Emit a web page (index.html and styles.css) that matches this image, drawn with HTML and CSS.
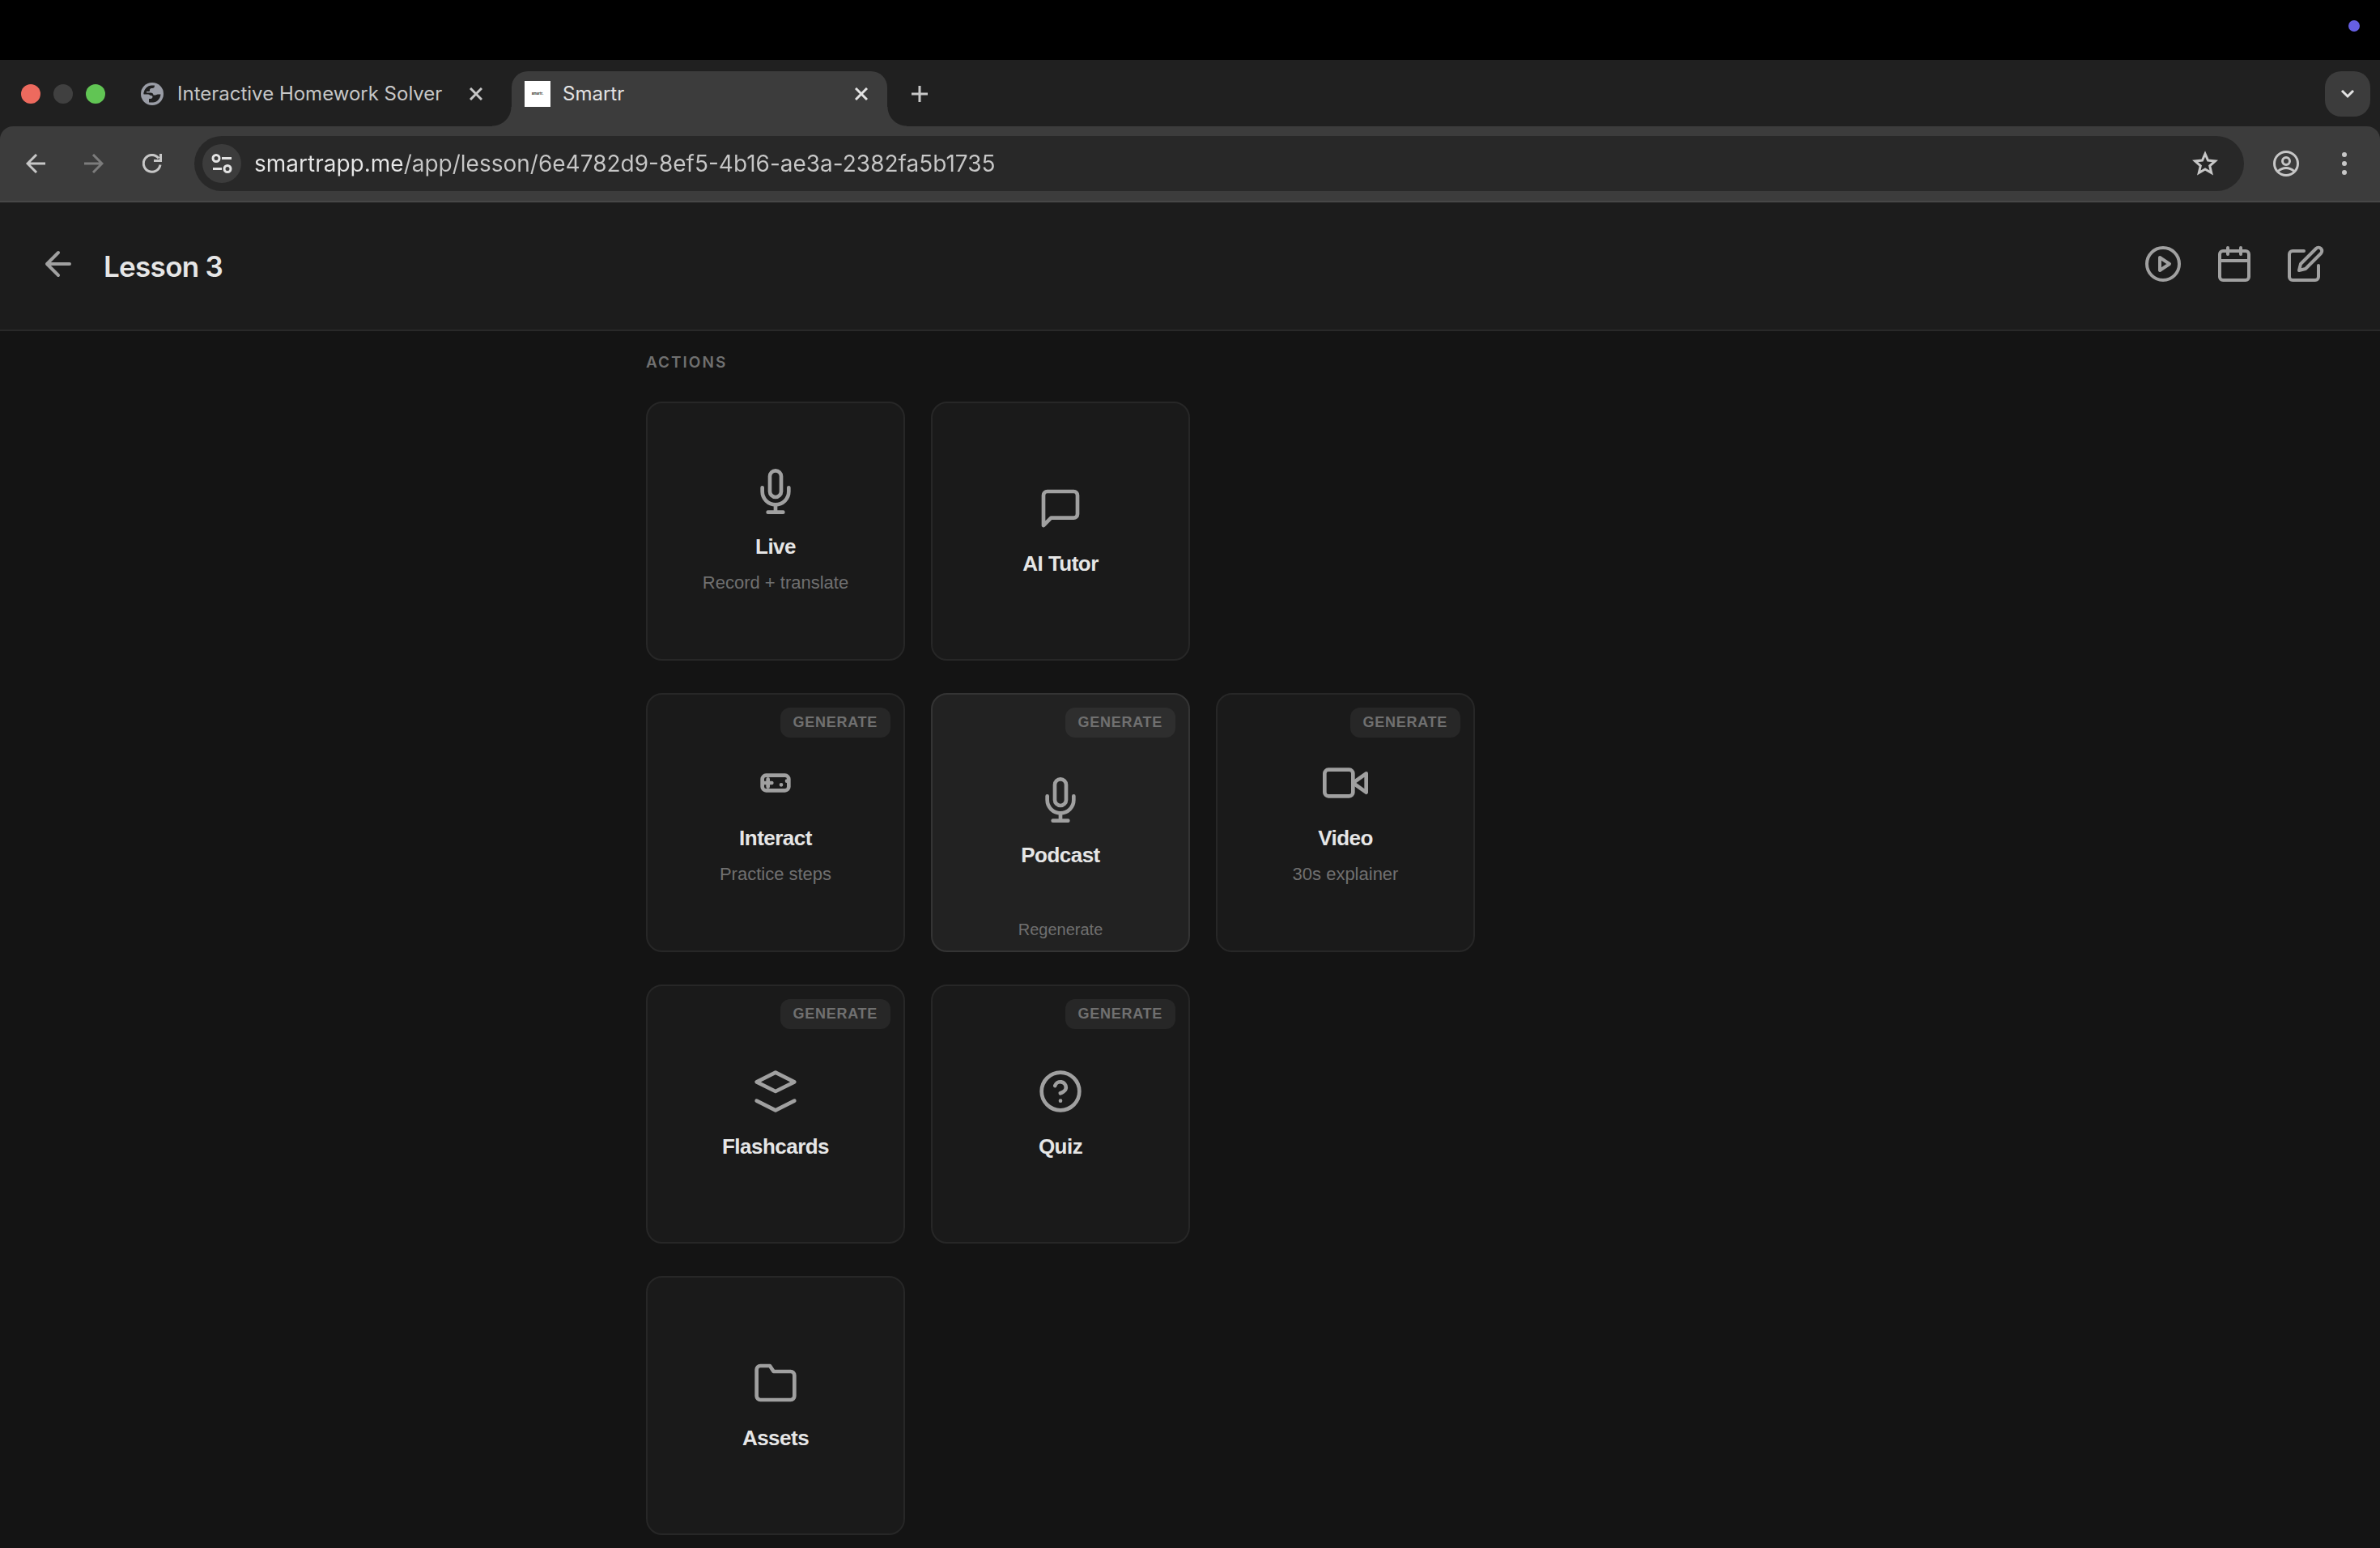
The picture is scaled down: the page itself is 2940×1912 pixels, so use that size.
FILE: index.html
```html
<!DOCTYPE html>
<html lang="en">
<head>
<meta charset="utf-8">
<meta name="viewport" content="width=device-width, initial-scale=1">
<title>Smartr</title>
<link rel="stylesheet" href="styles.css">
</head>
<body>
<div class="menubar"><span class="menubar-dot"></span></div>

<div class="browser">
  <div class="tabstrip">
    <div class="window-controls">
      <button class="light light-close" aria-label="Close window"></button>
      <button class="light light-min" aria-label="Minimise window"></button>
      <button class="light light-max" aria-label="Zoom window"></button>
    </div>
    <div class="tab">
      <span class="tab-icon">
        <svg width="28" height="28" viewBox="0 0 28 28"><circle cx="14" cy="14" r="14" fill="#9a9da6"/><path d="M3.500 13.500C4 8 8 3.500 13.500 3.500H17c0 2.500-1 3.500-3 3.500h-1c-1 0-2 1-2 2v1c0 1-1 1-2 1H7v2.500z" fill="#202020"/><path d="M3.500 12.500H12c2 0 3.500 1 3.500 3h2.500c1 0 1.500-1 3-1h3.500C24 20 20 24.500 15 24.500h-5V20h2c1.500 0 2.500-1 2.500-2.500 0-1-1-1.500-2-1.500-1.500 0-2-1.500-3.500-1.500H3.500z" fill="#202020"/></svg>
      </span>
      <span class="tab-title">Interactive Homework Solver</span>
      <button class="icon-btn tab-close" aria-label="Close tab"><svg width="16" height="16" viewBox="0 0 16 16"><path d="M1 1l14 14M15 1L1 15" stroke="#c7c7c7" stroke-width="3"/></svg></button>
    </div>
    <div class="tab tab-active">
      <span class="tab-icon favicon">Smartr.</span>
      <span class="tab-title">Smartr</span>
      <button class="icon-btn tab-close" aria-label="Close tab"><svg width="16" height="16" viewBox="0 0 16 16"><path d="M1 1l14 14M15 1L1 15" stroke="#e3e3e3" stroke-width="3"/></svg></button>
    </div>
    <button class="icon-btn new-tab" aria-label="New tab"><svg width="20" height="20" viewBox="0 0 20 20"><path d="M10 0v20M0 10h20" stroke="#c7c7c7" stroke-width="3"/></svg></button>
    <button class="icon-btn tab-search" aria-label="Search tabs"><svg width="18" height="12" viewBox="0 0 18 12"><path d="M2 2l7 7 7-7" fill="none" stroke="#e3e3e3" stroke-width="3"/></svg></button>
  </div>

  <div class="toolbar">
    <button class="icon-btn" aria-label="Back"><svg width="24" height="24" viewBox="0 0 24 24"><path d="M24 12H2M13 1L2 12l11 11" fill="none" stroke="#c7c7c7" stroke-width="3"/></svg></button>
    <button class="icon-btn" aria-label="Forward"><svg width="24" height="24" viewBox="0 0 24 24"><path d="M0 12h22M11 1l11 11-11 11" fill="none" stroke="#7c7c7c" stroke-width="3"/></svg></button>
    <button class="icon-btn" aria-label="Reload"><svg width="24" height="24" viewBox="0 0 24 24"><path d="M22 13.500A10.400 10.400 0 1 1 20 5.500M22.500 0v8.500H14" fill="none" stroke="#c7c7c7" stroke-width="3"/></svg></button>
    <div class="omnibox">
      <button class="icon-btn site-info" aria-label="View site information"><svg width="26" height="24" viewBox="0 0 26 24" fill="none" stroke="#e3e3e3" stroke-width="3"><circle cx="6" cy="5.500" r="4"/><path d="M13 5.500h12M2 18.500h11"/><circle cx="20" cy="18.500" r="4"/></svg></button>
      <input class="url" type="text" aria-label="Address" value="smartrapp.me/app/lesson/6e4782d9-8ef5-4b16-ae3a-2382fa5b1735" spellcheck="false">
      <button class="icon-btn" aria-label="Bookmark this tab"><svg width="32" height="32" viewBox="0 0 32 32"><path d="M16 4l3.500 8.100 8.900.8-6.700 5.900 2 8.700-7.700-4.600-7.700 4.600 2-8.700-6.700-5.900 8.900-.8z" fill="none" stroke="#c7c7c7" stroke-width="3"/></svg></button>
    </div>
    <button class="icon-btn" aria-label="Profile"><svg width="32" height="32" viewBox="0 0 32 32" fill="none" stroke="#c7c7c7" stroke-width="3"><circle cx="16" cy="16" r="14.500"/><circle cx="16" cy="13" r="4.500"/><path d="M6 25.500c6-5.500 14-5.500 20 0"/></svg></button>
    <button class="icon-btn" aria-label="Menu"><svg width="6" height="28" viewBox="0 0 6 28" fill="#c7c7c7"><circle cx="3" cy="3" r="3"/><circle cx="3" cy="14" r="3"/><circle cx="3" cy="25" r="3"/></svg></button>
  </div>
</div>

<header class="page-header">
  <button class="header-btn" aria-label="Go back"><svg class="line-icon" viewBox="0 0 24 24"><path d="M19 12H5M12 19l-7-7 7-7"/></svg></button>
  <h1 class="page-title">Lesson 3</h1>
  <nav class="header-actions" aria-label="Lesson tools">
    <button class="header-btn" aria-label="Play"><svg class="line-icon" viewBox="0 0 24 24"><circle cx="12" cy="12" r="10"/><path d="M10 8l6 4-6 4z"/></svg></button>
    <button class="header-btn" aria-label="Calendar"><svg class="line-icon" viewBox="0 0 24 24"><rect x="3" y="4" width="18" height="18" rx="2"/><path d="M16 2v4M8 2v4M3 10h18"/></svg></button>
    <button class="header-btn" aria-label="Edit"><svg class="line-icon" viewBox="0 0 24 24"><path d="M11 4H4a2 2 0 0 0-2 2v14a2 2 0 0 0 2 2h14a2 2 0 0 0 2-2v-7"/><path d="M18.500 2.500a2.121 2.121 0 0 1 3 3L12 15l-4 1 1-4z"/></svg></button>
  </nav>
</header>

<main class="content">
  <h2 class="section-label">ACTIONS</h2>
  <div class="rows">
    <div class="row">
      <button class="card">
        <svg class="line-icon card-icon" viewBox="0 0 24 24"><path d="M12 1a3 3 0 0 0-3 3v8a3 3 0 0 0 6 0V4a3 3 0 0 0-3-3z"/><path d="M19 10v2a7 7 0 0 1-14 0v-2M12 19v4M8 23h8"/></svg>
        <span class="card-title">Live</span>
        <span class="card-sub">Record + translate</span>
      </button>
      <button class="card">
        <svg class="line-icon card-icon" viewBox="0 0 24 24"><path d="M21 15a2 2 0 0 1-2 2H7l-4 4V5a2 2 0 0 1 2-2h14a2 2 0 0 1 2 2z"/></svg>
        <span class="card-title">AI Tutor</span>
      </button>
    </div>
    <div class="row">
      <button class="card">
        <span class="badge">GENERATE</span>
        <svg class="line-icon card-icon" viewBox="0 0 24 24"><rect x="5" y="8" width="14" height="8" rx="2"/><path d="M6 12h4M8 10v4M15 13h.010M18 11h.010"/></svg>
        <span class="card-title">Interact</span>
        <span class="card-sub">Practice steps</span>
      </button>
      <button class="card card-hover">
        <span class="badge">GENERATE</span>
        <svg class="line-icon card-icon" viewBox="0 0 24 24"><path d="M12 1a3 3 0 0 0-3 3v8a3 3 0 0 0 6 0V4a3 3 0 0 0-3-3z"/><path d="M19 10v2a7 7 0 0 1-14 0v-2M12 19v4M8 23h8"/></svg>
        <span class="card-title">Podcast</span>
        <span class="card-foot">Regenerate</span>
      </button>
      <button class="card">
        <span class="badge">GENERATE</span>
        <svg class="line-icon card-icon" viewBox="0 0 24 24"><path d="M23 7l-7 5 7 5z"/><rect x="1" y="5" width="15" height="14" rx="2"/></svg>
        <span class="card-title">Video</span>
        <span class="card-sub">30s explainer</span>
      </button>
    </div>
    <div class="row">
      <button class="card">
        <span class="badge">GENERATE</span>
        <svg class="line-icon card-icon" viewBox="0 0 24 24"><path d="M12 2L2 7l10 5 10-5zM2 17l10 5 10-5"/></svg>
        <span class="card-title">Flashcards</span>
      </button>
      <button class="card">
        <span class="badge">GENERATE</span>
        <svg class="line-icon card-icon" viewBox="0 0 24 24"><circle cx="12" cy="12" r="10"/><path d="M9.090 9a3 3 0 0 1 5.830 1c0 2-3 3-3 3M12 17h.010"/></svg>
        <span class="card-title">Quiz</span>
      </button>
    </div>
    <div class="row">
      <button class="card">
        <svg class="line-icon card-icon" viewBox="0 0 24 24"><path d="M22 19a2 2 0 0 1-2 2H4a2 2 0 0 1-2-2V5a2 2 0 0 1 2-2h5l2 3h9a2 2 0 0 1 2 2z"/></svg>
        <span class="card-title">Assets</span>
      </button>
    </div>
  </div>
</main>
</body>
</html>
```
FILE: styles.css
```css
* { box-sizing: border-box; }

body {
  margin: 0;
  min-height: 100vh;
  background: #141414;
  color: #e6e6e6;
  font-family: Inter, "Liberation Sans", sans-serif;
}

button {
  margin: 0;
  padding: 0;
  border: 0;
  background: none;
  color: inherit;
  font: inherit;
}

svg { display: block; }

/* System bar */
.menubar {
  display: flex;
  justify-content: flex-end;
  height: 74px;
  padding: 25px;
  background: #000;
}

.menubar-dot {
  width: 14px;
  height: 14px;
  border-radius: 50%;
  background: #665fe3;
}

/* Browser tabs */
.browser { background: #202020; }

.tabstrip {
  display: flex;
  padding: 14px 12px 0 26px;
}

.window-controls {
  display: flex;
  align-items: center;
  gap: 16px;
  height: 56px;
  margin-right: 26px;
}

.light {
  width: 24px;
  height: 24px;
  border-radius: 50%;
}

.light-close { background: #ed6a5e; }
.light-min { background: #404040; }
.light-max { background: #61c554; }

.tab {
  position: relative;
  display: flex;
  align-items: center;
  gap: 15px;
  width: 464px;
  height: 68px;
  padding: 0 20px 12px 16px;
  color: #c7c7c7;
  font-size: 24px;
  line-height: 32px;
}

.tab-active {
  margin-left: 12px;
  border-radius: 20px 20px 0 0;
  background: #3c3c3c;
  color: #e3e3e3;
}

.tab-active::before,
.tab-active::after {
  content: "";
  position: absolute;
  bottom: 0;
  width: 24px;
  height: 24px;
}

.tab-active::before {
  right: 100%;
  background: radial-gradient(circle at 0 0, transparent 23px, #3c3c3c 24px);
}

.tab-active::after {
  left: 100%;
  background: radial-gradient(circle at 100% 0, transparent 23px, #3c3c3c 24px);
}

.tab-icon {
  display: flex;
  align-items: center;
  justify-content: center;
  flex: none;
  width: 32px;
  height: 32px;
}

.favicon {
  background: #fff;
  color: #222;
  font-size: 4px;
  font-weight: 700;
  line-height: 8px;
}

.tab-title { flex: 1; white-space: nowrap; }

.icon-btn {
  display: flex;
  align-items: center;
  justify-content: center;
  flex: none;
  width: 48px;
  height: 48px;
  border-radius: 50%;
}

.tab-close { width: 24px; height: 24px; }

.new-tab { height: 56px; margin-left: 16px; }

.tab-search {
  width: 56px;
  height: 56px;
  margin-left: auto;
  border-radius: 20px;
  background: #3c3c3c;
}

/* Browser toolbar */
.toolbar {
  display: flex;
  align-items: center;
  gap: 24px;
  padding: 12px 20px;
  border-bottom: 2px solid #474747;
  border-radius: 16px 16px 0 0;
  background: #3c3c3c;
}

.omnibox {
  display: flex;
  align-items: center;
  flex: 1;
  gap: 16px;
  height: 68px;
  margin: 0 4px;
  padding: 0 24px 0 10px;
  border-radius: 34px;
  background: #282828;
}

.site-info { background: #3c3c3c; }

.url {
  flex: 1;
  min-width: 0;
  height: 40px;
  padding: 0;
  border: 0;
  outline: 0;
  background: linear-gradient(90deg, #e6e6e6 184px, #c7c7c7 184px);
  background-clip: text;
  -webkit-background-clip: text;
  color: transparent;
  font: 28px/40px Inter, "Liberation Sans", sans-serif;
}

/* Lesson header */
.page-header {
  display: flex;
  align-items: center;
  padding: 32px 48px 32px 28px;
  border-bottom: 2px solid #292929;
  background: #1c1c1c;
}

.header-btn { padding: 20px 20px 25px; }

.line-icon {
  width: 48px;
  height: 48px;
  fill: none;
  stroke: #a0a0a0;
  stroke-width: 2;
  stroke-linecap: round;
  stroke-linejoin: round;
}

.page-title {
  flex: 1;
  margin: 0 12px;
  color: #e6e6e6;
  font-size: 35px;
  font-weight: 600;
  line-height: 44px;
  letter-spacing: -0.02em;
}

.header-actions { display: flex; }

/* Action cards */
.content {
  max-width: 1440px;
  margin: 0 auto;
  padding: 27px 48px 16px;
}

.section-label {
  margin: 0 0 36px;
  color: #707070;
  font-size: 19px;
  font-weight: 600;
  line-height: 24px;
  letter-spacing: 2px;
}

.rows {
  display: flex;
  flex-direction: column;
  gap: 40px;
}

.row {
  display: flex;
  flex-wrap: wrap;
  gap: 32px;
}

.card {
  position: relative;
  display: flex;
  flex-direction: column;
  align-items: center;
  justify-content: center;
  width: 320px;
  height: 320px;
  border: 2px solid #272727;
  border-radius: 20px;
  background: #1a1a1a;
  font-family: "Liberation Sans", Arial, sans-serif;
}

.card-hover {
  border-color: #343434;
  background: #222;
}

.card-icon { width: 56px; height: 56px; }

.card-title {
  margin-top: 24px;
  color: #e6e6e6;
  font-size: 26px;
  font-weight: 700;
  line-height: 32px;
  letter-spacing: -0.02em;
}

.card-sub {
  margin-top: 16px;
  color: #707070;
  font-size: 22px;
  line-height: 26px;
}

.badge {
  position: absolute;
  top: 16px;
  right: 16px;
  padding: 8px 16px;
  border-radius: 12px;
  background: #272727;
  color: #707070;
  font-size: 18px;
  font-weight: 700;
  line-height: 21px;
  letter-spacing: 0.04em;
}

.card-hover .badge { background: #2e2e2e; }

.card-foot {
  position: absolute;
  bottom: 14px;
  color: #707070;
  font-size: 20px;
  line-height: 24px;
}
```
